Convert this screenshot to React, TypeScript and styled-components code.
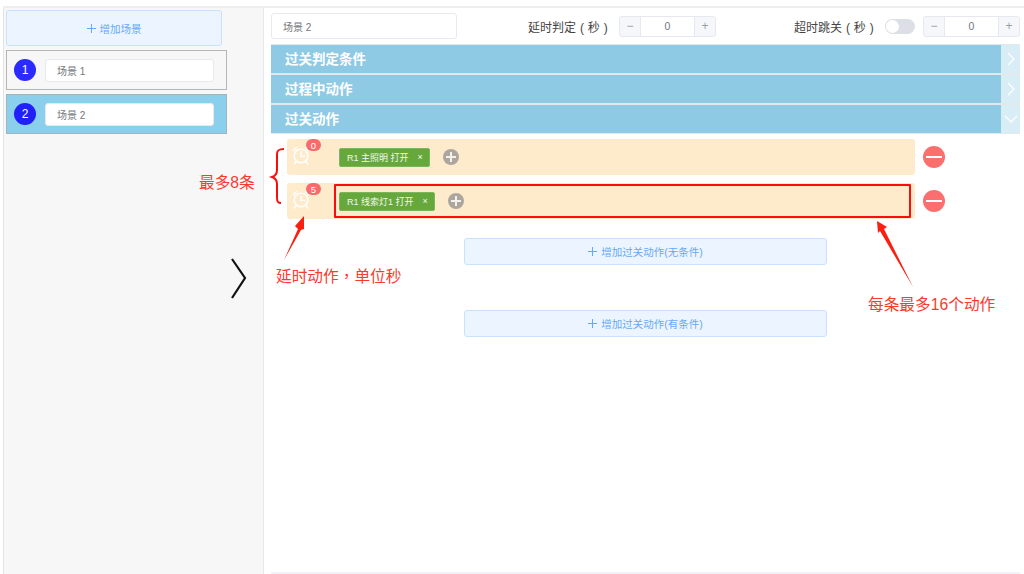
import React from "react";
import styled, { createGlobalStyle } from "styled-components";

const GlobalStyle = createGlobalStyle`
  html, body {
    margin: 0;
    padding: 0;
    background: #fff;
    font-family: "Liberation Sans", "Noto Sans CJK SC", sans-serif;
  }
  * { box-sizing: border-box; }
`;

const Page = styled.div`
  position: relative;
  width: 1024px;
  height: 574px;
  overflow: hidden;
  padding-top: 6px;
`;

const Frame = styled.div`
  display: flex;
  height: 568px;
  margin-left: 3px;
  border-top: 2px solid #eeeeee;
`;

const Sidebar = styled.aside`
  width: 261px;
  flex: none;
  background: #f7f7f7;
  border-left: 1px solid #e4e4e4;
  border-right: 1px solid #e8e8e8;
  padding: 2px 0 0 2px;
  display: flex;
  flex-direction: column;
  gap: 4px;
`;

const AddButton = styled.div<{ $width: number; $height: number }>`
  width: ${(p) => p.$width}px;
  height: ${(p) => p.$height}px;
  background: #ecf5ff;
  border: 1px solid #c6e2ff;
  border-radius: 3px;
  color: #66a9f5;
  font-size: 10.5px;
  display: flex;
  align-items: center;
  justify-content: center;
  gap: 4px;
`;

const SceneRow = styled.div<{ $active?: boolean }>`
  width: 221px;
  height: 40px;
  display: flex;
  align-items: center;
  padding-left: 7px;
  gap: 9px;
  border: 1px solid ${(p) => (p.$active ? "#a3b4bb" : "#b5b5b5")};
  background: ${(p) => (p.$active ? "#8acfec" : "#f7f7f7")};
`;

const SceneNumber = styled.span<{ $active?: boolean }>`
  width: 22px;
  height: 22px;
  flex: none;
  border-radius: 50%;
  background: ${(p) => (p.$active ? "#2020fa" : "#2b2bff")};
  color: #fff;
  font-size: 12px;
  display: flex;
  align-items: center;
  justify-content: center;
`;

const NameInput = styled.div<{ $width: number; $height: number }>`
  width: ${(p) => p.$width}px;
  height: ${(p) => p.$height}px;
  flex: none;
  background: #fff;
  border: 1px solid #e6e9ef;
  border-radius: 3px;
  padding-left: 11px;
  color: #74777c;
  font-size: 10px;
  display: flex;
  align-items: center;
`;

const Main = styled.main`
  flex: 1;
  min-width: 0;
  padding: 5px 4px 0 7px;
  display: flex;
  flex-direction: column;
`;

const TopBar = styled.div`
  height: 26px;
  display: flex;
  align-items: center;
  margin-bottom: 5px;
`;

const FieldLabel = styled.span<{ $left: number; $right: number }>`
  margin-left: ${(p) => p.$left}px;
  margin-right: ${(p) => p.$right}px;
  width: 84px;
  font-size: 12px;
  word-spacing: 0.6px;
  color: #444;
  white-space: nowrap;
`;

const Stepper = styled.div`
  width: 97px;
  height: 21px;
  flex: none;
  display: flex;
  border: 1px solid #e6e9ef;
  border-radius: 3px;
  background: #f5f7fa;
  color: #9a9da3;
  font-size: 12px;
`;

const StepButton = styled.span`
  width: 20px;
  flex: none;
  display: flex;
  align-items: center;
  justify-content: center;
`;

const StepValue = styled.span`
  flex: 1;
  background: #fff;
  border-left: 1px solid #e6e9ef;
  border-right: 1px solid #e6e9ef;
  color: #74777c;
  font-size: 10.5px;
  display: flex;
  align-items: center;
  justify-content: center;
`;

const Toggle = styled.span`
  width: 30px;
  height: 15px;
  flex: none;
  margin-right: 8px;
  border-radius: 8px;
  background: #dcdfe6;
  position: relative;
  &::after {
    content: "";
    position: absolute;
    top: 1px;
    left: 1px;
    width: 13px;
    height: 13px;
    border-radius: 50%;
    background: #fff;
  }
`;

const Panel = styled.div`
  height: 30px;
  display: flex;
  border-top: 1px solid #e3e8ea;
  border-bottom: 1px solid #e3e8ea;
`;

const PanelTitle = styled.div`
  flex: 1;
  height: 28px;
  background: #8fcae5;
  color: #fff;
  font-size: 13.5px;
  font-weight: 700;
  padding: 0 0 2px 14px;
  display: flex;
  align-items: center;
`;

const PanelToggle = styled.div`
  width: 19px;
  height: 28px;
  background: #d9edf6;
  display: flex;
  align-items: center;
  justify-content: center;
`;

const ActionList = styled.div`
  padding: 5px 0 0 16px;
  display: flex;
  flex-direction: column;
  gap: 8px;
`;

const ActionLine = styled.div`
  display: flex;
  align-items: center;
  gap: 8px;
`;

const ActionRow = styled.div`
  width: 628px;
  height: 36px;
  background: #feebcb;
  border-radius: 3px;
  padding-left: 52px;
  display: flex;
  align-items: center;
  gap: 13px;
  position: relative;
`;

const ClockWrap = styled.span`
  position: absolute;
  left: 5px;
  top: 6px;
  line-height: 0;
`;

const CountBadge = styled.span`
  position: absolute;
  left: 19px;
  top: 0;
  width: 15px;
  height: 12px;
  border-radius: 6px;
  background: #f56c6c;
  color: #fff;
  font-size: 9.5px;
  display: flex;
  align-items: center;
  justify-content: center;
`;

const ActionTag = styled.span`
  height: 19px;
  background: #67a83d;
  border: 1px solid #7cb65a;
  border-radius: 2px;
  color: #f2f7ee;
  font-size: 9px;
  padding: 0 6px 0 7px;
  display: flex;
  align-items: center;
  gap: 9px;
  white-space: nowrap;
`;

const RoundPlus = styled.span`
  width: 16px;
  height: 16px;
  border-radius: 50%;
  background: #aca69e;
  position: relative;
  &::before,
  &::after {
    content: "";
    position: absolute;
    background: #f4f1ec;
  }
  &::before {
    left: 3px;
    right: 3px;
    top: 7.25px;
    height: 1.5px;
  }
  &::after {
    top: 3px;
    bottom: 3px;
    left: 7.25px;
    width: 1.5px;
  }
`;

const RemoveButton = styled.span`
  width: 22px;
  height: 22px;
  flex: none;
  border-radius: 50%;
  background: #fb6f6f;
  position: relative;
  &::after {
    content: "";
    position: absolute;
    left: 3px;
    right: 3px;
    top: 10px;
    height: 2px;
    background: #fff;
  }
`;

const AddGroup = styled.div`
  margin: 19px 0 0 193px;
  display: flex;
  flex-direction: column;
  gap: 45px;
`;

const BottomRule = styled.div`
  margin-top: auto;
  height: 2px;
  background: #f3f2f8;
`;

const Note = styled.span<{ $left: number; $top: number }>`
  position: absolute;
  left: ${(p) => p.$left}px;
  top: ${(p) => p.$top}px;
  font-family: "Liberation Sans", "Noto Sans CJK TC", sans-serif;
  color: #fb3a2e;
  font-size: 15.7px;
  line-height: 18px;
  white-space: nowrap;
`;

const Highlight = styled.div`
  position: absolute;
  left: 334px;
  top: 184px;
  width: 577px;
  height: 34px;
  border: 2px solid #fb0d0d;
  border-radius: 1px;
`;

const Overlay = styled.svg`
  position: absolute;
  left: 0;
  top: 0;
  pointer-events: none;
`;

const Plus = () => (
  <svg width="9" height="9" viewBox="0 0 9 9">
    <path d="M0 4.5h9M4.5 0v9" stroke="currentColor" strokeWidth="1" />
  </svg>
);

const Chevron = ({ open }: { open?: boolean }) => (
  <svg width="14" height="14" viewBox="0 0 14 14" fill="none" stroke="#fff" strokeWidth="1.2">
    <path d={open ? "M1 4l6 6 6-6" : "M4 1l6 6-6 6"} />
  </svg>
);

const AlarmClock = () => (
  <svg width="18" height="21" viewBox="0 0 20 22" fill="none" stroke="#fff" strokeWidth="1.6" strokeLinecap="round">
    <circle cx="10" cy="11.5" r="7.6" />
    <path d="M10 7v5h4" />
    <path d="M1.5 5.5L5 2M18.5 5.5L15 2M4.5 18l-2 2.5M15.5 18l2 2.5" />
  </svg>
);

const Scene = ({ n, active }: { n: number; active?: boolean }) => (
  <SceneRow $active={active}>
    <SceneNumber $active={active}>{n}</SceneNumber>
    <NameInput $width={169} $height={23}>场景 {n}</NameInput>
  </SceneRow>
);

const NumberStepper = () => (
  <Stepper>
    <StepButton>−</StepButton>
    <StepValue>0</StepValue>
    <StepButton>+</StepButton>
  </Stepper>
);

const Action = ({ delay, label }: { delay: number; label: string }) => (
  <ActionLine>
    <ActionRow>
      <ClockWrap>
        <AlarmClock />
      </ClockWrap>
      <CountBadge>{delay}</CountBadge>
      <ActionTag>
        {label}
        <span>×</span>
      </ActionTag>
      <RoundPlus />
    </ActionRow>
    <RemoveButton />
  </ActionLine>
);

export default function App() {
  return (
    <Page>
      <GlobalStyle />
      <Frame>
        <Sidebar>
          <AddButton $width={216} $height={36}>
            <Plus />
            增加场景
          </AddButton>
          <Scene n={1} />
          <Scene n={2} active />
        </Sidebar>
        <Main>
          <TopBar>
            <NameInput $width={186} $height={26}>场景 2</NameInput>
            <FieldLabel $left={71} $right={7}>延时判定 ( 秒 )</FieldLabel>
            <NumberStepper />
            <FieldLabel $left={78} $right={7}>超时跳关 ( 秒 )</FieldLabel>
            <Toggle />
            <NumberStepper />
          </TopBar>
          <Panel>
            <PanelTitle>过关判定条件</PanelTitle>
            <PanelToggle><Chevron /></PanelToggle>
          </Panel>
          <Panel>
            <PanelTitle>过程中动作</PanelTitle>
            <PanelToggle><Chevron /></PanelToggle>
          </Panel>
          <Panel>
            <PanelTitle>过关动作</PanelTitle>
            <PanelToggle><Chevron open /></PanelToggle>
          </Panel>
          <ActionList>
            <Action delay={0} label="R1 主照明 打开" />
            <Action delay={5} label="R1 线索灯1 打开" />
          </ActionList>
          <AddGroup>
            <AddButton $width={363} $height={27}>
              <Plus />
              增加过关动作(无条件)
            </AddButton>
            <AddButton $width={363} $height={27}>
              <Plus />
              增加过关动作(有条件)
            </AddButton>
          </AddGroup>
          <BottomRule />
        </Main>
      </Frame>

      <Highlight />
      <Note $left={199} $top={174}>最多8条</Note>
      <Note $left={276} $top={268}>延时动作，单位秒</Note>
      <Note $left={868} $top={296}>每条最多16个动作</Note>
      <Overlay width="1024" height="574" viewBox="0 0 1024 574" fill="none">
        {/* brace next to the rows */}
        <path
          d="M284 149c-5 0-7 1-7 5v16c0 4-2 6-5 7 3 1 5 3 5 7v14c0 4 1 5 4 5"
          stroke="#fb0d0d"
          strokeWidth="2"
        />
        {/* big arrow head in the empty sidebar */}
        <path d="M232 259l13 19-13 20" stroke="#111" strokeWidth="2.2" />
        {/* callout arrows */}
        <path d="M284 260l14-31-3-3 9-10 0 13-3 1z" fill="#fb1f10" />
        <path d="M877 221l10 6-3 2 29 58-33-56-2 2z" fill="#fb1f10" />
      </Overlay>
    </Page>
  );
}
